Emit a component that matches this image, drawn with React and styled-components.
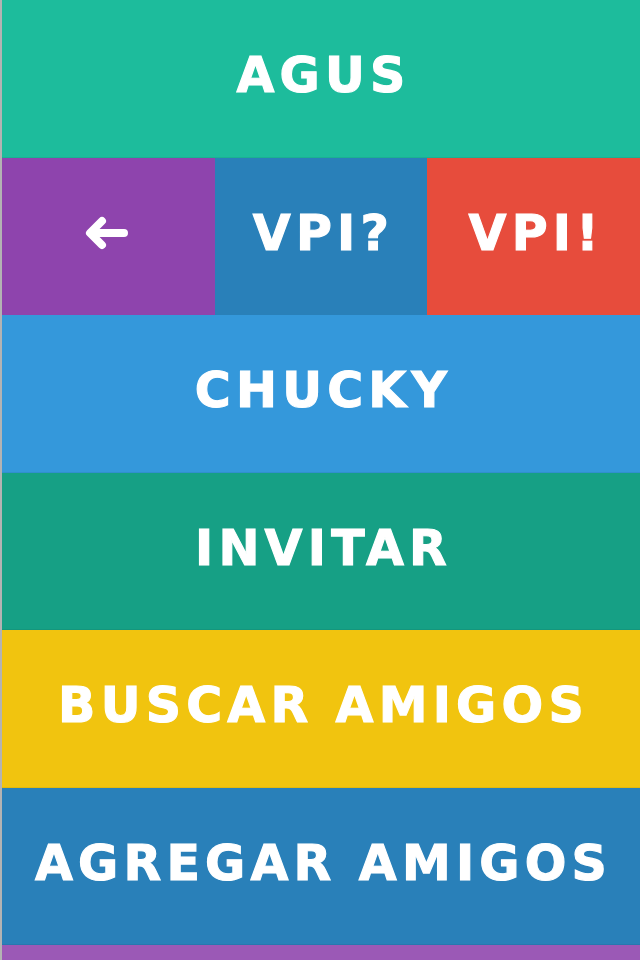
import styled, { createGlobalStyle } from "styled-components";

const GlobalStyle = createGlobalStyle`
  html, body {
    margin: 0;
    padding: 0;
    background: #fff;
  }
  body {
    font-family: "DejaVu Sans", Verdana, sans-serif;
  }
`;

const Screen = styled.div`
  width: 640px;
  height: 960px;
  overflow: hidden;
  border-left: 2px solid #b3b3b3;
  box-sizing: border-box;
  display: flex;
  flex-direction: column;
`;

const Row = styled.div`
  height: 157.5px;
  flex: none;
  display: flex;
  background: ${(p) => p.$bg};
  box-shadow: inset 0 -1px 0 rgba(0, 0, 0, 0.06);
`;

const Tile = styled.button`
  flex: 1 1 0;
  min-width: 0;
  box-sizing: border-box;
  border: none;
  margin: 0;
  padding: 0 0 6px 5px;
  background: ${(p) => p.$bg || "transparent"};
  color: #fff;
  font-family: "DejaVu Sans", Verdana, sans-serif;
  font-weight: 700;
  font-size: 49px;
  letter-spacing: 5.2px;
  -webkit-text-stroke: 1.1px #fff;
  display: flex;
  align-items: center;
  justify-content: center;
  cursor: pointer;
  white-space: nowrap;

  svg {
    margin-right: 8px;
  }
`;

const Strip = styled.div`
  flex: 1;
  background: #9b59b6;
`;

const BackArrow = () => (
  <svg width="48" height="36" viewBox="0 0 48 36" fill="none">
    <path
      d="M41 18H8M19 6L7 18l12 12"
      stroke="#fff"
      strokeWidth="8"
      strokeLinecap="round"
      strokeLinejoin="round"
    />
  </svg>
);

export default function App() {
  return (
    <>
      <GlobalStyle />
      <Screen>
        <Row $bg="#1dbc9c">
          <Tile>AGUS</Tile>
        </Row>
        <Row $bg="#2980b9">
          <Tile $bg="#8e44ad" aria-label="Volver">
            <BackArrow />
          </Tile>
          <Tile $bg="#2980b9">VPI?</Tile>
          <Tile $bg="#e74c3c">VPI!</Tile>
        </Row>
        <Row $bg="#3498db">
          <Tile>CHUCKY</Tile>
        </Row>
        <Row $bg="#16a085">
          <Tile>INVITAR</Tile>
        </Row>
        <Row $bg="#f1c40f">
          <Tile>BUSCAR AMIGOS</Tile>
        </Row>
        <Row $bg="#2980b9">
          <Tile>AGREGAR AMIGOS</Tile>
        </Row>
        <Strip />
      </Screen>
    </>
  );
}
